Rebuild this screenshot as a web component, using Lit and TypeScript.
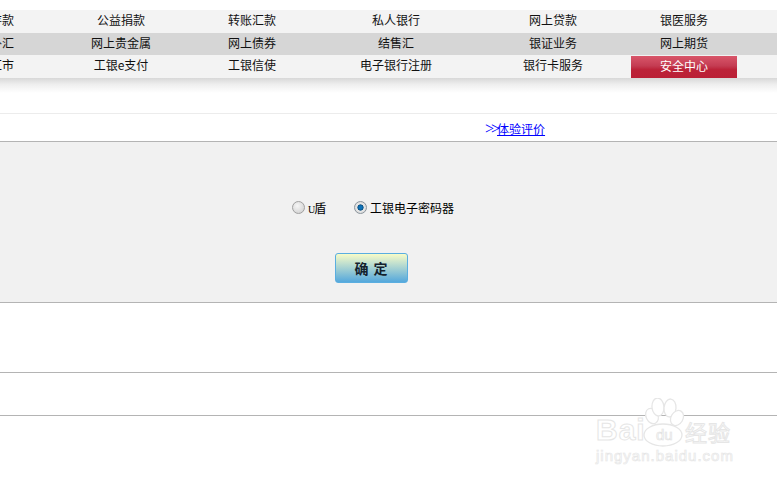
import { LitElement, html, css, svg } from "lit";
import { customElement } from "lit/decorators.js";

const ROWS = [
  ["定期存款", "公益捐款", "转账汇款", "私人银行", "网上贷款", "银医服务"],
  ["账户外汇", "网上贵金属", "网上债券", "结售汇", "银证业务", "网上期货"],
  ["网上汇市", "工银e支付", "工银信使", "电子银行注册", "银行卡服务", "安全中心"],
];

@customElement("app-root")
export class AppRoot extends LitElement {
  static styles = css`
    :host {
      display: block;
      position: relative;
      width: 777px;
      height: 482px;
      overflow: hidden;
      background: #fff;
      font-family: "Noto Sans CJK SC", "Liberation Sans", sans-serif;
      font-size: 12px;
      color: #000;
    }
    .nav {
      margin-top: 10px;
      height: 68px;
      display: flex;
      flex-direction: column;
      background: #f3f3f3;
    }
    .shade {
      height: 15px;
      background: linear-gradient(#d8d8d8, #efefef 45%, #fff);
    }
    .row {
      display: grid;
      grid-template-columns: 130px 132px 130px 158px 156px 106px 40px;
      margin-left: -75px;
      height: 22px;
      flex: none;
      line-height: 20px;
      text-align: center;
      color: #111;
      background: #f3f3f3;
    }
    .row.mid {
      background: #d6d6d6;
      margin-top: 1px;
    }
    .row.last {
      height: 23px;
    }
    .cell.red {
      color: #fff;
      margin-top: 1px;
      line-height: 19px;
      background: linear-gradient(#d9566a, #c43c52 45%, #bc2238 62%, #bb1f35);
    }
    .eval {
      margin-top: 20px;
      height: 27px;
      border-top: 1px solid #ececec;
      border-bottom: 1px solid #b4b4b4;
      box-sizing: content-box;
      padding-left: 485px;
      line-height: 30px;
      color: #0000ff;
      white-space: nowrap;
    }
    .arrows {
      font-family: "Liberation Serif", serif;
      font-size: 16px;
      line-height: 1;
      letter-spacing: -3px;
    }
    .eval a {
      color: #0000ff;
      text-decoration: underline;
    }
    .panel {
      height: 160px;
      background: #f1f1f1;
      border-bottom: 1px solid #b4b4b4;
      display: flex;
      flex-direction: column;
      align-items: flex-start;
    }
    .options {
      margin: 58px 0 0 292px;
      height: 16px;
      display: flex;
      align-items: center;
      line-height: 16px;
    }
    .radio {
      width: 13px;
      height: 13px;
      border-radius: 50%;
      border: 1px solid #a0a0a0;
      box-sizing: border-box;
      background: radial-gradient(circle at 40% 35%, #f6f6f6, #cccccc);
      margin: -2px 3px 0 0;
    }
    .radio.on {
      background: radial-gradient(circle, #0d72b8 0 1.6px, #0a4f80 2.8px, #e8e8e8 3.4px, #cfcfcf);
      border-color: #8a949c;
    }
    .u {
      width: 17px;
      margin-right: 29px;
      white-space: nowrap;
    }
    .u i {
      font: normal 10px "Liberation Serif", serif;
      letter-spacing: -1px;
    }
    .ok {
      margin: 37px 0 0 335px;
      width: 73px;
      height: 30px;
      box-sizing: border-box;
      border: 1px solid #5aaee0;
      border-radius: 3px;
      background: linear-gradient(#f8fcc8, #55a8dc);
      font: bold 14px/27px "Noto Sans CJK SC", sans-serif;
      letter-spacing: 1px;
      color: #14222e;
      text-align: center;
      padding: 0;
    }
    .sec1 {
      height: 69px;
      border-bottom: 1px solid #b4b4b4;
    }
    .sec2 {
      height: 42px;
      border-bottom: 1px solid #b4b4b4;
    }
    .mark {
      position: absolute;
      left: 596px;
      top: 398px;
      width: 140px;
      height: 70px;
    }
    .mark svg {
      position: absolute;
      left: 0;
      top: 0;
    }
    .mark span {
      position: absolute;
      color: #fff;
      -webkit-text-stroke: 1px #e6e6e6;
      white-space: nowrap;
    }
    .bai {
      left: 0;
      top: 15px;
      font: bold 30px/34px "Liberation Sans", sans-serif;
      letter-spacing: 1px;
    }
    .jy {
      left: 89px;
      top: 20px;
      font-size: 22px;
      line-height: 26px;
      letter-spacing: 1px;
    }
    .mark .site {
      left: 0;
      top: 49px;
      font: 15px/18px "Liberation Sans", sans-serif;
      letter-spacing: 1px;
      -webkit-text-stroke: 0.7px #e6e6e6;
    }
    .mark .du {
      left: 60px;
      top: 29px;
      font: 15px/16px "Liberation Sans", sans-serif;
      -webkit-text-stroke: 0.7px #e2e2e2;
    }
  `;

  private paw() {
    return svg`
      <g fill="#fff" stroke="#e6e6e6" stroke-width="1.3">
        <ellipse cx="56" cy="18" rx="6" ry="8" transform="rotate(-25 56 18)"/>
        <ellipse cx="62" cy="9" rx="6" ry="9" transform="rotate(-5 62 9)"/>
        <ellipse cx="74" cy="10" rx="6" ry="9" transform="rotate(5 74 10)"/>
        <ellipse cx="81" cy="20" rx="6" ry="8" transform="rotate(30 81 20)"/>
        <ellipse cx="67" cy="37" rx="19" ry="11"/>
      </g>`;
  }

  render() {
    return html`
      <div class="nav">
        ${ROWS.map(
          (r, i) => html`<div class="row ${i === 1 ? "mid" : i === 2 ? "last" : ""}">
            ${r.map(
              (t) => html`<div class="cell ${t === "安全中心" ? "red" : ""}">${t}</div>`
            )}
          </div>`
        )}
      </div>
      <div class="shade"></div>
      <div class="eval"><span class="arrows">&gt;&gt;</span><a href="#">体验评价</a></div>
      <div class="panel">
        <div class="options">
          <span class="radio"></span><span class="u"><i>U</i>盾</span>
          <span class="radio on"></span><span>工银电子密码器</span>
        </div>
        <button class="ok">确 定</button>
      </div>
      <div class="sec1"></div>
      <div class="sec2"></div>
      <div class="mark">
        <svg width="140" height="70" viewBox="0 0 140 70">${this.paw()}</svg>
        <span class="bai">Bai</span>
        <span class="du">du</span>
        <span class="jy">经验</span>
        <span class="site">jingyan.baidu.com</span>
      </div>
    `;
  }
}
